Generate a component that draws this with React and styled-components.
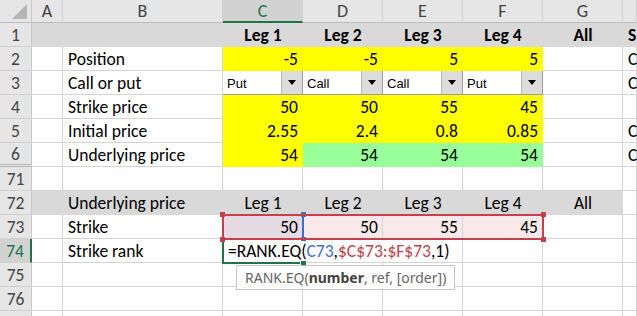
import React from "react";
import styled, { createGlobalStyle } from "styled-components";

const GlobalStyle = createGlobalStyle`
  html, body { margin: 0; padding: 0; background: #fff; overflow: hidden; }
  body { font-family: Carlito, Calibri, "Noto Sans", "Open Sans", sans-serif; }
`;

const COLS = "32px 31px 160px 80px 80px 80px 80px 80px 14px";
const GRID = "#d4d4d4";
const YELLOW = "#ffff00";
const GREEN = "#99ff99";
const GREY = "#d9d9d9";
const EXCEL = "#217346";
const RED = "#c3414b";
const BLUE = "#3c6fd1";
const LETTERS = ["A", "B", "C", "D", "E", "F", "G", ""];

const Sheet = styled.div`
  width: 637px;
  height: 316px;
  overflow: hidden;
  display: flex;
  flex-direction: column;
  font-size: 17.5px;
  color: #000;
`;

const Row = styled.div`
  display: grid;
  grid-template-columns: ${COLS};
  grid-template-rows: ${(p) => p.$h || 24}px;
  flex: none;
`;

const Corner = styled.div`
  grid-row: 1;
  grid-column: 1;
  position: relative;
  box-sizing: border-box;
  background: #e6e6e6;
  border-right: 1px solid #c9c9c9;
  border-bottom: 1px solid #bcbcbc;
  &::after {
    content: "";
    position: absolute;
    right: 4px;
    bottom: 3px;
    border-left: 15px solid transparent;
    border-bottom: 15px solid #b5b5b5;
  }
`;

const ColHead = styled.div`
  grid-row: 1;
  grid-column: ${(p) => p.$col};
  box-sizing: border-box;
  display: flex;
  align-items: center;
  justify-content: center;
  font-size: 18px;
  background: ${(p) => (p.$active ? "#d2d2d2" : "#e6e6e6")};
  color: ${(p) => (p.$active ? EXCEL : "#444")};
  border-right: 1px solid #d0d0d0;
  border-bottom: ${(p) => (p.$active ? `2px solid ${EXCEL}` : "1px solid #bcbcbc")};
`;

const RowHead = styled.div`
  grid-row: 1;
  grid-column: 1;
  box-sizing: border-box;
  display: flex;
  align-items: center;
  justify-content: center;
  padding-top: 1px;
  font-size: 17.5px;
  background: ${(p) => (p.$active ? "#d2d2d2" : "#e6e6e6")};
  color: ${(p) => (p.$active ? EXCEL : "#444")};
  border-right: ${(p) => (p.$active ? `2px solid ${EXCEL}` : "1px solid #c9c9c9")};
  border-bottom: ${(p) => (p.$hidden ? "3px double #b8b8b8" : "1px solid #d0d0d0")};
`;

const Cell = styled.div`
  grid-row: 1;
  grid-column: ${(p) => p.$col};
  position: relative;
  box-sizing: border-box;
  min-width: 0;
  display: flex;
  align-items: center;
  justify-content: ${(p) =>
    p.$align === "right" ? "flex-end" : p.$align === "center" ? "center" : "flex-start"};
  padding: 1px 4px 0 5px;
  white-space: nowrap;
  font-weight: ${(p) => (p.$bold ? 700 : 400)};
  background: ${(p) => p.$fill || p.$tint || "#fff"};
  border-right: 1px solid ${(p) => p.$fill || GRID};
  border-bottom: 1px solid ${(p) => p.$fill || GRID};
`;

const DropCell = styled.div`
  grid-row: 1;
  grid-column: ${(p) => p.$col};
  box-sizing: border-box;
  display: flex;
  background: #fff;
  border-left: ${(p) => (p.$first ? "1px solid #9e9e9e" : "none")};
  border-right: 1px solid #9e9e9e;
  border-bottom: 1px solid #9e9e9e;
  margin-left: ${(p) => (p.$first ? "-1px" : "0")};
`;

const DropLabel = styled.span`
  flex: 1;
  display: flex;
  align-items: center;
  padding: 2px 0 0 4px;
  font-family: "Liberation Sans", Arial, sans-serif;
  font-size: 13px;
`;

const DropButton = styled.span`
  width: 20px;
  display: flex;
  align-items: center;
  justify-content: center;
  background: #dcdcdc;
  border-left: 1px solid #b4b4b4;
  &::before {
    content: "";
    border-left: 4.5px solid transparent;
    border-right: 4.5px solid transparent;
    border-top: 5px solid #000;
  }
`;

const RangeBox = styled.div`
  grid-row: 1;
  grid-column: ${(p) => p.$span};
  margin: -1px;
  position: relative;
  z-index: ${(p) => p.$z};
  border: 2px solid ${(p) => p.$color};
  pointer-events: none;
`;

const Handle = styled.span`
  position: absolute;
  width: 5px;
  height: 5px;
  background: ${(p) => p.$color};
  ${(p) => (p.$top ? "top: -4px;" : "bottom: -4px;")}
  ${(p) => (p.$left ? "left: -4px;" : "right: -4px;")}
`;

const FillHandle = styled.span`
  position: absolute;
  right: -5px;
  bottom: -5px;
  width: 5px;
  height: 5px;
  background: ${EXCEL};
  border: 1px solid #fff;
`;

const Formula = styled.span`
  position: relative;
  z-index: 2;
  height: 20px;
  display: flex;
  align-items: center;
  padding-right: 5px;
  background: #fff;
`;

const Ref = styled.span`
  color: ${(p) => p.$color};
`;

const Tooltip = styled.div`
  position: absolute;
  z-index: 5;
  left: 13px;
  top: 26px;
  height: 25px;
  box-sizing: border-box;
  padding: 0 8px;
  display: flex;
  align-items: center;
  background: #fff;
  border: 1px solid #c6c6c6;
  color: #666;
  font-family: "Noto Sans", "Open Sans", sans-serif;
  font-size: 14px;
  b {
    color: #444;
    font-weight: 700;
  }
`;

const legs = ["Leg 1", "Leg 2", "Leg 3", "Leg 4"];

const dataRows = [
  {
    n: 2,
    label: "Position",
    values: ["-5", "-5", "5", "5"],
    fills: [YELLOW, YELLOW, YELLOW, YELLOW],
    h: "C",
  },
  {
    n: 4,
    label: "Strike price",
    values: ["50", "50", "55", "45"],
    fills: [YELLOW, YELLOW, YELLOW, YELLOW],
  },
  {
    n: 5,
    label: "Initial price",
    values: ["2.55", "2.4", "0.8", "0.85"],
    fills: [YELLOW, YELLOW, YELLOW, YELLOW],
    h: "C",
  },
  {
    n: 6,
    label: "Underlying price",
    values: ["54", "54", "54", "54"],
    fills: [YELLOW, GREEN, GREEN, GREEN],
    h: "C",
    hidden: true,
  },
];

function Blank({ from = 2, to = 9, fill }) {
  const out = [];
  for (let c = from; c <= to; c++) out.push(<Cell key={c} $col={c} $fill={fill} />);
  return out;
}

function DataRow({ n, label, values, fills, h, hidden }) {
  return (
    <Row>
      <RowHead $hidden={hidden}>{n}</RowHead>
      <Cell $col={2} />
      <Cell $col={3}>{label}</Cell>
      {values.map((v, i) => (
        <Cell key={i} $col={4 + i} $align="right" $fill={fills[i]}>
          {v}
        </Cell>
      ))}
      <Cell $col={8} />
      <Cell $col={9}>{h}</Cell>
    </Row>
  );
}

function EmptyRow({ n }) {
  return (
    <Row>
      <RowHead>{n}</RowHead>
      <Blank />
    </Row>
  );
}

export default function App() {
  return (
    <Sheet>
      <GlobalStyle />

      <Row $h={23}>
        <Corner />
        {LETTERS.map((l, i) => (
          <ColHead key={i} $col={i + 2} $active={l === "C"}>
            {l}
          </ColHead>
        ))}
      </Row>

      <Row>
        <RowHead>1</RowHead>
        <Cell $col={2} $fill={GREY} />
        <Cell $col={3} $fill={GREY} />
        {legs.map((l, i) => (
          <Cell key={l} $col={4 + i} $fill={GREY} $align="center" $bold>
            {l}
          </Cell>
        ))}
        <Cell $col={8} $fill={GREY} $align="center" $bold>
          All
        </Cell>
        <Cell $col={9} $fill={GREY} $bold>
          S
        </Cell>
      </Row>

      <DataRow {...dataRows[0]} />

      <Row>
        <RowHead>3</RowHead>
        <Cell $col={2} />
        <Cell $col={3}>Call or put</Cell>
        {["Put", "Call", "Call", "Put"].map((t, i) => (
          <DropCell key={i} $col={4 + i} $first={i === 0}>
            <DropLabel>{t}</DropLabel>
            <DropButton />
          </DropCell>
        ))}
        <Cell $col={8} />
        <Cell $col={9}>C</Cell>
      </Row>

      {dataRows.slice(1).map((r) => (
        <DataRow key={r.n} {...r} />
      ))}

      <EmptyRow n={71} />

      <Row>
        <RowHead>72</RowHead>
        <Cell $col={2} $fill={GREY} />
        <Cell $col={3} $fill={GREY}>
          Underlying price
        </Cell>
        {legs.map((l, i) => (
          <Cell key={l} $col={4 + i} $fill={GREY} $align="center">
            {l}
          </Cell>
        ))}
        <Cell $col={8} $fill={GREY} $align="center">
          All
        </Cell>
        <Cell $col={9} />
      </Row>

      <Row>
        <RowHead>73</RowHead>
        <Cell $col={2} />
        <Cell $col={3}>Strike</Cell>
        {["50", "50", "55", "45"].map((v, i) => (
          <Cell key={i} $col={4 + i} $align="right" $tint={i === 0 ? "#e6dbe3" : "#fae9ea"}>
            {v}
          </Cell>
        ))}
        <Cell $col={8} />
        <Cell $col={9} />
        <RangeBox $span="4 / 5" $color={BLUE} $z={2}>
          <Handle $color={BLUE} $top />
          <Handle $color={BLUE} />
        </RangeBox>
        <RangeBox $span="4 / 8" $color={RED} $z={3}>
          <Handle $color={RED} $top $left />
          <Handle $color={RED} $left />
          <Handle $color={RED} $top />
          <Handle $color={RED} />
        </RangeBox>
      </Row>

      <Row>
        <RowHead $active>74</RowHead>
        <Cell $col={2} />
        <Cell $col={3}>Strike rank</Cell>
        <Cell $col={4}>
          <Formula>
            =RANK.EQ(<Ref $color={BLUE}>C73</Ref>,<Ref $color={RED}>$C$73:$F$73</Ref>,1)
          </Formula>
          <Tooltip>
            RANK.EQ(<b>number</b>, ref, [order])
          </Tooltip>
        </Cell>
        <Blank from={5} />
        <RangeBox $span="4 / 5" $color={EXCEL} $z={1}>
          <FillHandle />
        </RangeBox>
      </Row>

      <EmptyRow n={75} />
      <EmptyRow n={76} />
      <EmptyRow n="" />
    </Sheet>
  );
}
